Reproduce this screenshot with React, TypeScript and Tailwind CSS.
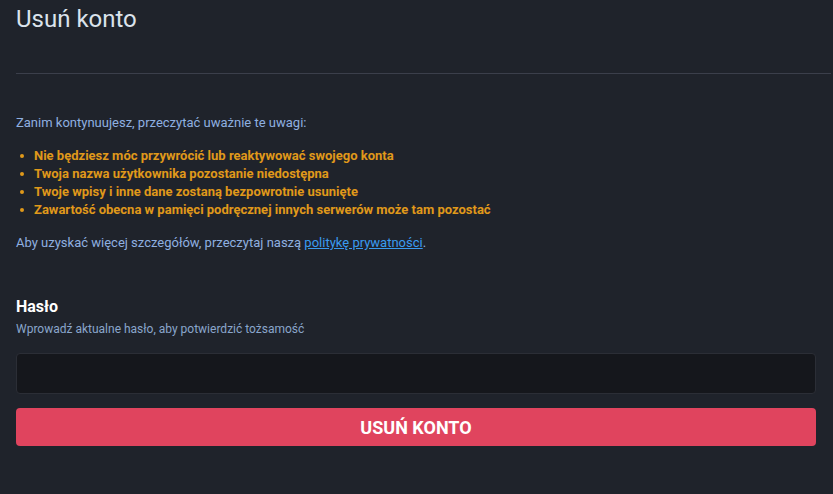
import React from "react";

export default function App() {
  return (
    <div
      className="min-h-screen w-full bg-[#1f232b] pl-4 pr-[17px]"
      style={{ fontFamily: "Roboto, 'Noto Sans', sans-serif" }}
    >
      <h1 className="pt-[3px] text-[24px] leading-[32px] font-normal text-[#dbe3ec]">Usuń konto</h1>
      <div className="mt-[38px] mr-[-15px] h-px bg-[#3b3f4b]" />
      <p className="mt-[40px] text-[13px] leading-[18px] text-[#8fb0e0]">
        Zanim kontynuujesz, przeczytać uważnie te uwagi:
      </p>
      <ul className="mt-[15px] text-[13px] leading-[18px] font-bold text-[#e0991a]">
        {[
          "Nie będziesz móc przywrócić lub reaktywować swojego konta",
          "Twoja nazwa użytkownika pozostanie niedostępna",
          "Twoje wpisy i inne dane zostaną bezpowrotnie usunięte",
          "Zawartość obecna w pamięci podręcznej innych serwerów może tam pozostać",
        ].map((t) => (
          <li key={t} className="flex items-center">
            <span className="ml-[4px] mr-[10px] h-[4px] w-[4px] rounded-full bg-[#e0991a]" />
            <span>{t}</span>
          </li>
        ))}
      </ul>
      <p className="mt-[15px] text-[13px] leading-[18px] text-[#8fb0e0]">
        Aby uzyskać więcej szczegółów, przeczytaj naszą{" "}
        <a className="text-[#3a9bf0] underline" href="#">
          politykę prywatności
        </a>
        .
      </p>
      <h2 className="mt-[43px] text-[16px] leading-[24px] font-bold text-white">Hasło</h2>
      <p className="mt-[2px] text-[12px] leading-[16px] text-[#8aa6cc]">
        Wprowadź aktualne hasło, aby potwierdzić tożsamość
      </p>
      <input
        type="password"
        className="mt-[16px] block h-[41px] w-full rounded-[4px] border border-[#2b2e36] bg-[#15171c] px-3 text-white outline-none"
      />
      <button className="mt-[14px] flex h-[38px] w-full items-center justify-center rounded-[4px] bg-[#e0445e] text-[18px] font-bold uppercase text-white">
        Usuń konto
      </button>
    </div>
  );
}
